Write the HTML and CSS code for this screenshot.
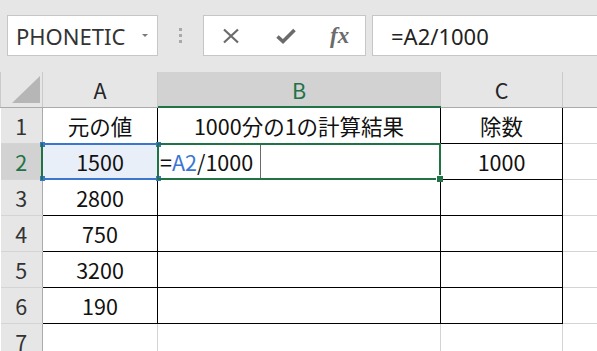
FILE: index.html
```html
<!DOCTYPE html>
<html lang="ja">
<head>
  <meta charset="UTF-8">
  <title>1000分の1の計算</title>
  <link rel="stylesheet" href="styles.css">
</head>
<body>
  <div class="toolbar">
    <div class="name-box">PHONETIC<span class="caret"></span></div>
    <div class="grip"><i></i><i></i><i></i></div>
    <div class="fx-buttons">
      <svg class="btn-cancel" width="18" height="16" viewBox="0 0 18 16">
        <path d="M2 1.5 L16 14.5 M16 1.5 L2 14.5" stroke="#6b6b6b" stroke-width="2.2" fill="none"/>
      </svg>
      <svg class="btn-enter" width="20" height="16" viewBox="0 0 20 16">
        <path d="M1.5 8.5 L7 13.5 L18.5 2" stroke="#6b6b6b" stroke-width="3.6" fill="none"/>
      </svg>
      <span class="btn-fx">fx</span>
    </div>
    <div class="formula">=A2/1000</div>
  </div>

  <table class="sheet">
    <colgroup>
      <col class="c-head">
      <col class="c-a">
      <col class="c-b">
      <col class="c-c">
      <col class="c-d">
    </colgroup>
    <tr class="col-heads">
      <th class="corner">
        <svg width="42" height="34" viewBox="0 0 42 34"><polygon points="39,4 39,31 11,31" fill="#b6b6b6"/></svg>
      </th>
      <th>A</th>
      <th class="head-sel">B</th>
      <th>C</th>
      <th></th>
    </tr>
    <tr>
      <th class="row-head">1</th>
      <td class="box">元の値</td>
      <td class="box">1000分の1の計算結果</td>
      <td class="box">除数</td>
      <td></td>
    </tr>
    <tr>
      <th class="row-head row-sel">2</th>
      <td class="box ref">1500<span class="ref-frame"><i class="tl"></i><i class="tr"></i><i class="bl"></i><i class="br"></i></span></td>
      <td class="box active"><span class="edit">=<span class="ref-text">A2</span>/1000</span><span class="edit-edge"></span><span class="active-frame"><i></i></span></td>
      <td class="box">1000</td>
      <td></td>
    </tr>
    <tr>
      <th class="row-head">3</th>
      <td class="box">2800</td>
      <td class="box"></td>
      <td class="box"></td>
      <td></td>
    </tr>
    <tr>
      <th class="row-head">4</th>
      <td class="box">750</td>
      <td class="box"></td>
      <td class="box"></td>
      <td></td>
    </tr>
    <tr>
      <th class="row-head">5</th>
      <td class="box">3200</td>
      <td class="box"></td>
      <td class="box"></td>
      <td></td>
    </tr>
    <tr>
      <th class="row-head">6</th>
      <td class="box">190</td>
      <td class="box"></td>
      <td class="box"></td>
      <td></td>
    </tr>
    <tr>
      <th class="row-head">7</th>
      <td></td>
      <td></td>
      <td></td>
      <td></td>
    </tr>
  </table>
</body>
</html>
```

FILE: styles.css
```css
body {
  margin: 0;
  width: 597px;
  height: 351px;
  overflow: hidden;
  background: #e6e6e6;
  font-family: "Noto Sans CJK JP", "Noto Sans", sans-serif;
  color: #111;
}

/* formula bar */
.toolbar {
  display: flex;
  align-items: center;
  height: 72px;
  padding: 15px 0 16px 7px;
  box-sizing: border-box;
}

.name-box {
  display: flex;
  align-items: center;
  width: 151px;
  height: 41px;
  box-sizing: border-box;
  padding-left: 8px;
  border: 1px solid #c6c6c6;
  background: #fff;
  font-family: "Noto Sans", sans-serif;
  font-size: 22px;
  color: #333;
}

.caret {
  margin-left: auto;
  margin-right: 9px;
  border-left: 3px solid transparent;
  border-right: 3px solid transparent;
  border-top: 3px solid #7a7a7a;
}

.grip {
  display: flex;
  flex-direction: column;
  gap: 3px;
  margin-left: 21px;
}

.grip i {
  width: 3px;
  height: 3px;
  background: #a9a9a9;
}

.fx-buttons {
  display: flex;
  align-items: center;
  width: 163px;
  height: 41px;
  box-sizing: border-box;
  margin-left: 21px;
  padding-left: 18px;
  border: 1px solid #c6c6c6;
  background: #fff;
}

.btn-enter {
  margin-left: 36px;
}

.btn-fx {
  margin-left: 34px;
  font-family: "Liberation Serif", serif;
  font-style: italic;
  font-weight: bold;
  font-size: 23px;
  color: #6b6b6b;
}

.formula {
  flex: 1;
  display: flex;
  align-items: center;
  height: 41px;
  box-sizing: border-box;
  margin-left: 6px;
  margin-right: -10px;
  padding-left: 18px;
  border: 1px solid #c6c6c6;
  background: #fff;
  font-family: "Noto Sans", sans-serif;
  font-size: 22px;
  color: #222;
}

/* grid */
.sheet {
  border-collapse: collapse;
  table-layout: fixed;
  width: 602px;
  background: #fff;
}

.c-head { width: 42px; }
.c-a { width: 115px; }
.c-b { width: 283px; }
.c-c { width: 122px; }
.c-d { width: 40px; }

.sheet tr {
  height: 36px;
}

.sheet tr.col-heads {
  height: 35px;
}

.sheet th,
.sheet td {
  padding: 0;
  font-size: 21.5px;
  font-weight: normal;
  text-align: center;
  white-space: nowrap;
  border: 1px solid #d4d4d4;
}

.col-heads th {
  background: #e6e6e6;
  color: #262626;
  border-top: none;
  border-left: 1px solid #cacaca;
  border-right: 1px solid #cacaca;
  border-bottom: 1px solid #ababab;
}

.corner {
  line-height: 0;
}

.head-sel {
  position: relative;
  background: #d2d2d2 !important;
  color: #217346 !important;
}

.head-sel::after {
  content: "";
  position: absolute;
  left: 0;
  right: -1px;
  bottom: -1px;
  height: 2px;
  background: #217346;
}

.row-head {
  background: #e6e6e6;
  color: #333;
  border-left: none !important;
  border-right: 1px solid #ababab !important;
  border-top: 1px solid #d0d0d0;
  border-bottom: 1px solid #d0d0d0;
}

.row-sel {
  position: relative;
  background: #d2d2d2;
  color: #217346;
}

.row-sel::after {
  content: "";
  position: absolute;
  top: -1px;
  bottom: -1px;
  right: -1px;
  width: 2px;
  background: #217346;
  z-index: 3;
}

.sheet td.box {
  border: 1px solid #000;
}

/* referenced cell A2 */
.ref {
  position: relative;
  background: #e8eff9;
}

.ref-frame {
  position: absolute;
  top: -1px;
  bottom: -1px;
  left: -1px;
  right: -1px;
  border-top: 2px solid #3a76d0;
  border-bottom: 2px solid #3a76d0;
  z-index: 1;
}

.ref-frame i {
  position: absolute;
  width: 5px;
  height: 5px;
  background: #3a76d0;
}

.ref-frame .tl { left: -2px; top: -3px; }
.ref-frame .tr { right: -3px; top: -3px; }
.ref-frame .bl { left: -2px; bottom: -3px; }
.ref-frame .br { right: -3px; bottom: -3px; }

/* active cell B2 */
.active {
  position: relative;
  text-align: left !important;
}

.edit {
  padding-left: 2px;
}

.ref-text {
  color: #3a76d0;
}

.edit-edge {
  position: absolute;
  left: 102px;
  top: 0;
  bottom: 0;
  width: 1px;
  background: #6a6a6a;
}

.active-frame {
  position: absolute;
  top: -1px;
  bottom: -1px;
  left: -1px;
  right: -1px;
  border: 2px solid #217346;
  z-index: 2;
}

.active-frame i {
  position: absolute;
  right: -4px;
  bottom: -4px;
  width: 6px;
  height: 6px;
  background: #217346;
  border-left: 1px solid #fff;
  border-top: 1px solid #fff;
}
```
